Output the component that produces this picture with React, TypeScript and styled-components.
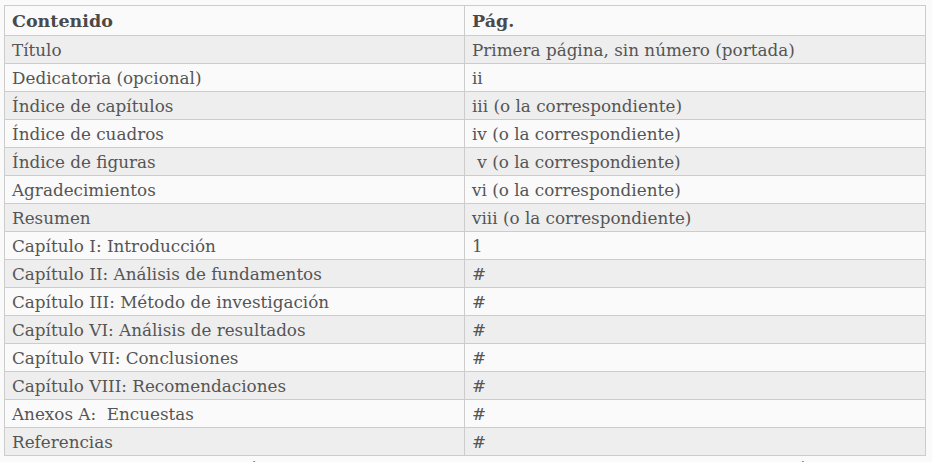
import React from "react";
import styled, { createGlobalStyle } from "styled-components";

const Global = createGlobalStyle`
  html, body { margin: 0; padding: 0; background: #fafafa; }
  body { font-family: "DejaVu Serif", "Liberation Serif", serif; color: #555; }
`;

const Page = styled.div`
  padding: 5px 6px 0 4px;
  width: 932px;
  height: 462px;
  box-sizing: border-box;
  overflow: hidden;
`;

const Table = styled.table`
  width: 922px;
  border-collapse: collapse;
  border: 1px solid #ccc;
  font-size: 16.8px;
  table-layout: fixed;
`;

const HeadCell = styled.th<{ $w?: number }>`
  text-align: left;
  font-weight: bold;
  font-size: 17.5px;
  color: #4a4a4a;
  height: 29px;
  padding: 0 8px 0 7px;
  border: 1px solid #ccc;
  background: #fafafa;
  ${(p) => (p.$w ? `width: ${p.$w}px;` : "")}
`;

const Row = styled.tr<{ $odd: boolean }>`
  background: ${(p) => (p.$odd ? "#eeeeee" : "#fafafa")};
`;

const Cell = styled.td`
  height: 27px;
  padding: 0 8px 0 7px;
  border: 1px solid #ccc;
  white-space: pre;
  color: #555;
`;

const Caption = styled.p`
  margin: 3px 0 0;
  text-align: center;
  font-size: 15px;
  color: #666;
`;

const rows: [string, string][] = [
  ["Título", "Primera página, sin número (portada)"],
  ["Dedicatoria (opcional)", "ii"],
  ["Índice de capítulos", "iii (o la correspondiente)"],
  ["Índice de cuadros", "iv (o la correspondiente)"],
  ["Índice de figuras", " v (o la correspondiente)"],
  ["Agradecimientos", "vi (o la correspondiente)"],
  ["Resumen", "viii (o la correspondiente)"],
  ["Capítulo I: Introducción", "1"],
  ["Capítulo II: Análisis de fundamentos", "#"],
  ["Capítulo III: Método de investigación", "#"],
  ["Capítulo VI: Análisis de resultados", "#"],
  ["Capítulo VII: Conclusiones", "#"],
  ["Capítulo VIII: Recomendaciones", "#"],
  ["Anexos A:  Encuestas", "#"],
  ["Referencias", "#"],
];

export default function App() {
  return (
    <>
      <Global />
      <Page>
        <Table>
          <thead>
            <tr>
              <HeadCell $w={444}>Contenido</HeadCell>
              <HeadCell>Pág.</HeadCell>
            </tr>
          </thead>
          <tbody>
            {rows.map(([a, b], i) => (
              <Row key={i} $odd={i % 2 === 0}>
                <Cell>{a}</Cell>
                <Cell>{b}</Cell>
              </Row>
            ))}
          </tbody>
        </Table>
        <Caption>Fuente: elaboración propia con base en el reglamento de trabajos de grado de la institución</Caption>
      </Page>
    </>
  );
}
